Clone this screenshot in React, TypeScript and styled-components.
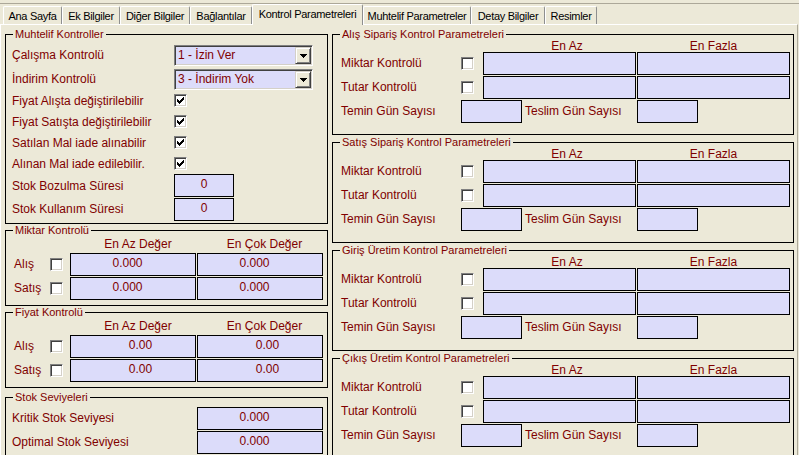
import React from "react";
import styled, { createGlobalStyle } from "styled-components";

const BG = "#ece9d8";
const MAROON = "#800000";
const FIELD = "#dcdcfa";

const GlobalStyle = createGlobalStyle`
  html, body { margin: 0; padding: 0; background: ${BG}; }
  body { font-family: "Liberation Sans", Arial, sans-serif; }
  * { box-sizing: border-box; }
`;

const Window = styled.div`
  width: 799px;
  height: 455px;
  overflow: hidden;
  background: ${BG};
  padding-top: 3px;
`;

const TabStrip = styled.div`
  display: flex;
  align-items: flex-end;
  height: 21px;
  border-top: 1px solid #aca899;
  padding-left: 3px;
`;

const Tab = styled.div<{ $w: number; $active?: boolean }>`
  position: relative;
  z-index: ${(p) => (p.$active ? 2 : 1)};
  width: ${(p) => p.$w}px;
  height: ${(p) => (p.$active ? 21 : 18)}px;
  margin-bottom: ${(p) => (p.$active ? -1 : 0)}px;
  display: flex;
  align-items: center;
  justify-content: center;
  padding-bottom: ${(p) => (p.$active ? 2 : 0)}px;
  background: ${BG};
  border-top: 1px solid #fff;
  border-left: 1px solid #fff;
  border-right: 1px solid #8e8f8f;
  border-radius: 2px 2px 0 0;
  font-size: 11px;
  letter-spacing: -0.3px;
  color: #000;
  white-space: nowrap;
`;

const Panel = styled.div`
  display: flex;
  gap: 4px;
  width: 798px;
  height: 431px;
  padding: 3px 0 0 4px;
  border-top: 1px solid #fff;
  border-left: 1px solid #fff;
  border-right: 1px solid #aca899;
`;

const Column = styled.div<{ $w: number; $gap: number }>`
  display: flex;
  flex-direction: column;
  gap: ${(p) => p.$gap}px;
  width: ${(p) => p.$w}px;
  flex: none;
`;

const Group = styled.fieldset<{ $h: number; $mt?: number }>`
  margin: ${(p) => p.$mt ?? 0}px 0 0;
  padding: 0;
  min-width: 0;
  height: ${(p) => p.$h}px;
  flex: none;
  border: 1px solid #000;
`;

const Legend = styled.legend`
  margin-left: 7px;
  padding: 0 2px;
  font-size: 11px;
  line-height: 12px;
  color: ${MAROON};
`;

const Label = styled.span`
  font-size: 12px;
  color: ${MAROON};
  white-space: nowrap;
`;

/* Muhtelif Kontroller */
const MiscBody = styled.div`
  display: flex;
  flex-direction: column;
  padding: 2px 0 0 6px;
`;

const MiscRow = styled.div<{ $h: number; $end?: boolean }>`
  display: flex;
  align-items: ${(p) => (p.$end ? "flex-end" : "center")};
  height: ${(p) => p.$h}px;
  line-height: ${(p) => (p.$end ? "21px" : "normal")};
  & > ${Label} {
    width: 162px;
  }
`;

const Combo = styled.div`
  width: 139px;
  height: 21px;
  display: flex;
  align-items: center;
  padding: 0 1px 0 3px;
  background: ${FIELD};
  border: 1px solid;
  border-color: #808080 #fff #fff #808080;
  box-shadow: inset 1px 1px 0 #404040, inset -1px -1px 0 #d4d0c8;
  font-size: 12px;
  color: ${MAROON};
  line-height: 17px;
`;

const ComboText = styled.span`
  flex: 1;
  white-space: nowrap;
`;

const ComboButton = styled.span`
  width: 16px;
  height: 17px;
  display: flex;
  align-items: center;
  justify-content: center;
  background: ${BG};
  border: 1px solid;
  border-color: #d4d0c8 #404040 #404040 #d4d0c8;
  box-shadow: inset 1px 1px 0 #fff, inset -1px -1px 0 #808080;
`;

const Check = styled.span`
  width: 13px;
  height: 13px;
  flex: none;
  display: block;
  background: #fff;
  border: 1px solid;
  border-color: #808080 #fff #fff #808080;
  box-shadow: inset 1px 1px 0 #404040, inset -1px -1px 0 #d4d0c8;
  position: relative;
  & svg {
    position: absolute;
    left: -1px;
    top: -1px;
  }
`;

const Field = styled.div<{ $w: number; $pl?: number; $pr?: number }>`
  width: ${(p) => p.$w}px;
  height: 23px;
  display: flex;
  align-items: center;
  justify-content: center;
  padding: 0 ${(p) => p.$pr ?? 0}px 3px ${(p) => p.$pl ?? 0}px;
  background: ${FIELD};
  border: 1px solid #000;
  font-size: 12px;
  color: ${MAROON};
`;

/* Miktar / Fiyat */
const RangeGrid = styled.div`
  display: grid;
  grid-template-columns: 36px 20px 127px 126px;
  grid-template-rows: 16px 24px 24px;
  align-items: center;
  padding-left: 8px;
`;

const Head = styled.div<{ $pl?: number }>`
  text-align: center;
  padding-left: ${(p) => p.$pl ?? 0}px;
  font-size: 12px;
  color: ${MAROON};
  line-height: 12px;
  white-space: nowrap;
`;

/* Stok seviyeleri */
const LevelGrid = styled.div`
  display: grid;
  grid-template-columns: 185px 126px;
  grid-auto-rows: 24px;
  align-items: center;
  padding: 3px 0 0 6px;
`;

/* Right side parameter groups */
const ParamGrid = styled.div`
  display: grid;
  grid-template-columns: 120px 22px 154px 153px;
  grid-template-rows: 11px 24px 24px 24px;
  align-items: center;
  padding-left: 8px;
`;

const Span23 = styled.div`
  grid-column: 2 / 4;
  display: flex;
  align-items: center;
  gap: 3px;
`;

const Tick = () => (
  <svg width="13" height="13" viewBox="0 0 13 13">
    <path
      fill="#000"
      d="M9 3h1v1h-1zM8 4h2v1h-2zM3 5h1v1h-1zM7 5h3v1h-3zM3 6h2v1h-2zM6 6h3v1h-3zM3 7h5v1h-5zM4 8h3v1h-3zM5 9h1v1h-1z"
    />
  </svg>
);

const Arrow = () => (
  <svg width="7" height="4" viewBox="0 0 7 4">
    <path fill="#000" d="M0 0h7v1h-1v1h-1v1h-1v1h-1v-1h-1v-1h-1v-1h-1z" />
  </svg>
);

const tabs = [
  { label: "Ana Sayfa", w: 59 },
  { label: "Ek Bilgiler", w: 58 },
  { label: "Diğer Bilgiler", w: 70 },
  { label: "Bağlantılar", w: 62 },
  { label: "Kontrol Parametreleri", w: 111, active: true },
  { label: "Muhtelif Parametreler", w: 108 },
  { label: "Detay Bilgiler", w: 74 },
  { label: "Resimler", w: 52 },
];

const checks = [
  "Fiyat Alışta değiştirilebilir",
  "Fiyat Satışta değiştirilebilir",
  "Satılan Mal iade alınabilir",
  "Alınan Mal iade edilebilir.",
];

const paramGroups = [
  "Alış Sipariş Kontrol Parametreleri",
  "Satış Sipariş Kontrol Parametreleri",
  "Giriş Üretim Kontrol Parametreleri",
  "Çıkış Üretim Kontrol Parametreleri",
];

function RangeGroup({
  title,
  value,
  pl,
  pr,
}: {
  title: string;
  value: string;
  pl?: number;
  pr?: number;
}) {
  return (
    <Group $h={82}>
      <Legend>{title}</Legend>
      <RangeGrid>
        <span />
        <span />
        <Head $pl={9}>En Az Değer</Head>
        <Head $pl={9}>En Çok Değer</Head>
        {["Alış", "Satış"].map((r) => (
          <React.Fragment key={r}>
            <Label>{r}</Label>
            <Check />
            <Field $w={126} $pl={pl} $pr={pr}>
              {value}
            </Field>
            <Field $w={126} $pl={pl} $pr={pr}>
              {value}
            </Field>
          </React.Fragment>
        ))}
      </RangeGrid>
    </Group>
  );
}

function ParamGroup({ title }: { title: string }) {
  return (
    <Group $h={107}>
      <Legend>{title}</Legend>
      <ParamGrid>
        <span />
        <span />
        <Head $pl={14}>En Az</Head>
        <Head>En Fazla</Head>
        {["Miktar Kontrolü", "Tutar Kontrolü"].map((r) => (
          <React.Fragment key={r}>
            <Label>{r}</Label>
            <Check />
            <Field $w={153} />
            <Field $w={153} />
          </React.Fragment>
        ))}
        <Label>Temin Gün Sayısı</Label>
        <Span23>
          <Field $w={61} />
          <Label>Teslim Gün Sayısı</Label>
        </Span23>
        <Field $w={61} />
      </ParamGrid>
    </Group>
  );
}

export default function App() {
  return (
    <Window>
      <GlobalStyle />
      <TabStrip>
        {tabs.map((t) => (
          <Tab key={t.label} $w={t.w} $active={t.active}>
            {t.label}
          </Tab>
        ))}
      </TabStrip>
      <Panel>
        <Column $w={323} $gap={0}>
          <Group $h={196}>
            <Legend>Muhtelif Kontroller</Legend>
            <MiscBody>
              <MiscRow $h={24} $end>
                <Label>Çalışma Kontrolü</Label>
                <Combo>
                  <ComboText>1 - İzin Ver</ComboText>
                  <ComboButton>
                    <Arrow />
                  </ComboButton>
                </Combo>
              </MiscRow>
              <MiscRow $h={24} $end>
                <Label>İndirim Kontrolü</Label>
                <Combo>
                  <ComboText>3 - İndirim Yok</ComboText>
                  <ComboButton>
                    <Arrow />
                  </ComboButton>
                </Combo>
              </MiscRow>
              {checks.map((c) => (
                <MiscRow key={c} $h={21}>
                  <Label>{c}</Label>
                  <Check>
                    <Tick />
                  </Check>
                </MiscRow>
              ))}
              <MiscRow $h={23}>
                <Label>Stok Bozulma Süresi</Label>
                <Field $w={60}>0</Field>
              </MiscRow>
              <MiscRow $h={24}>
                <Label>Stok Kullanım Süresi</Label>
                <Field $w={60}>0</Field>
              </MiscRow>
            </MiscBody>
          </Group>
          <RangeGroup title="Miktar Kontrolü" value="0.000" pr={11} />
          <RangeGroup title="Fiyat Kontrolü" value="0.00" pl={15} />
          <Group $h={100} $mt={3}>
            <Legend>Stok Seviyeleri</Legend>
            <LevelGrid>
              <Label>Kritik Stok Seviyesi</Label>
              <Field $w={126} $pr={11}>
                0.000
              </Field>
              <Label>Optimal Stok Seviyesi</Label>
              <Field $w={126} $pr={11}>
                0.000
              </Field>
            </LevelGrid>
          </Group>
        </Column>
        <Column $w={462} $gap={1}>
          {paramGroups.map((g) => (
            <ParamGroup key={g} title={g} />
          ))}
        </Column>
      </Panel>
    </Window>
  );
}
